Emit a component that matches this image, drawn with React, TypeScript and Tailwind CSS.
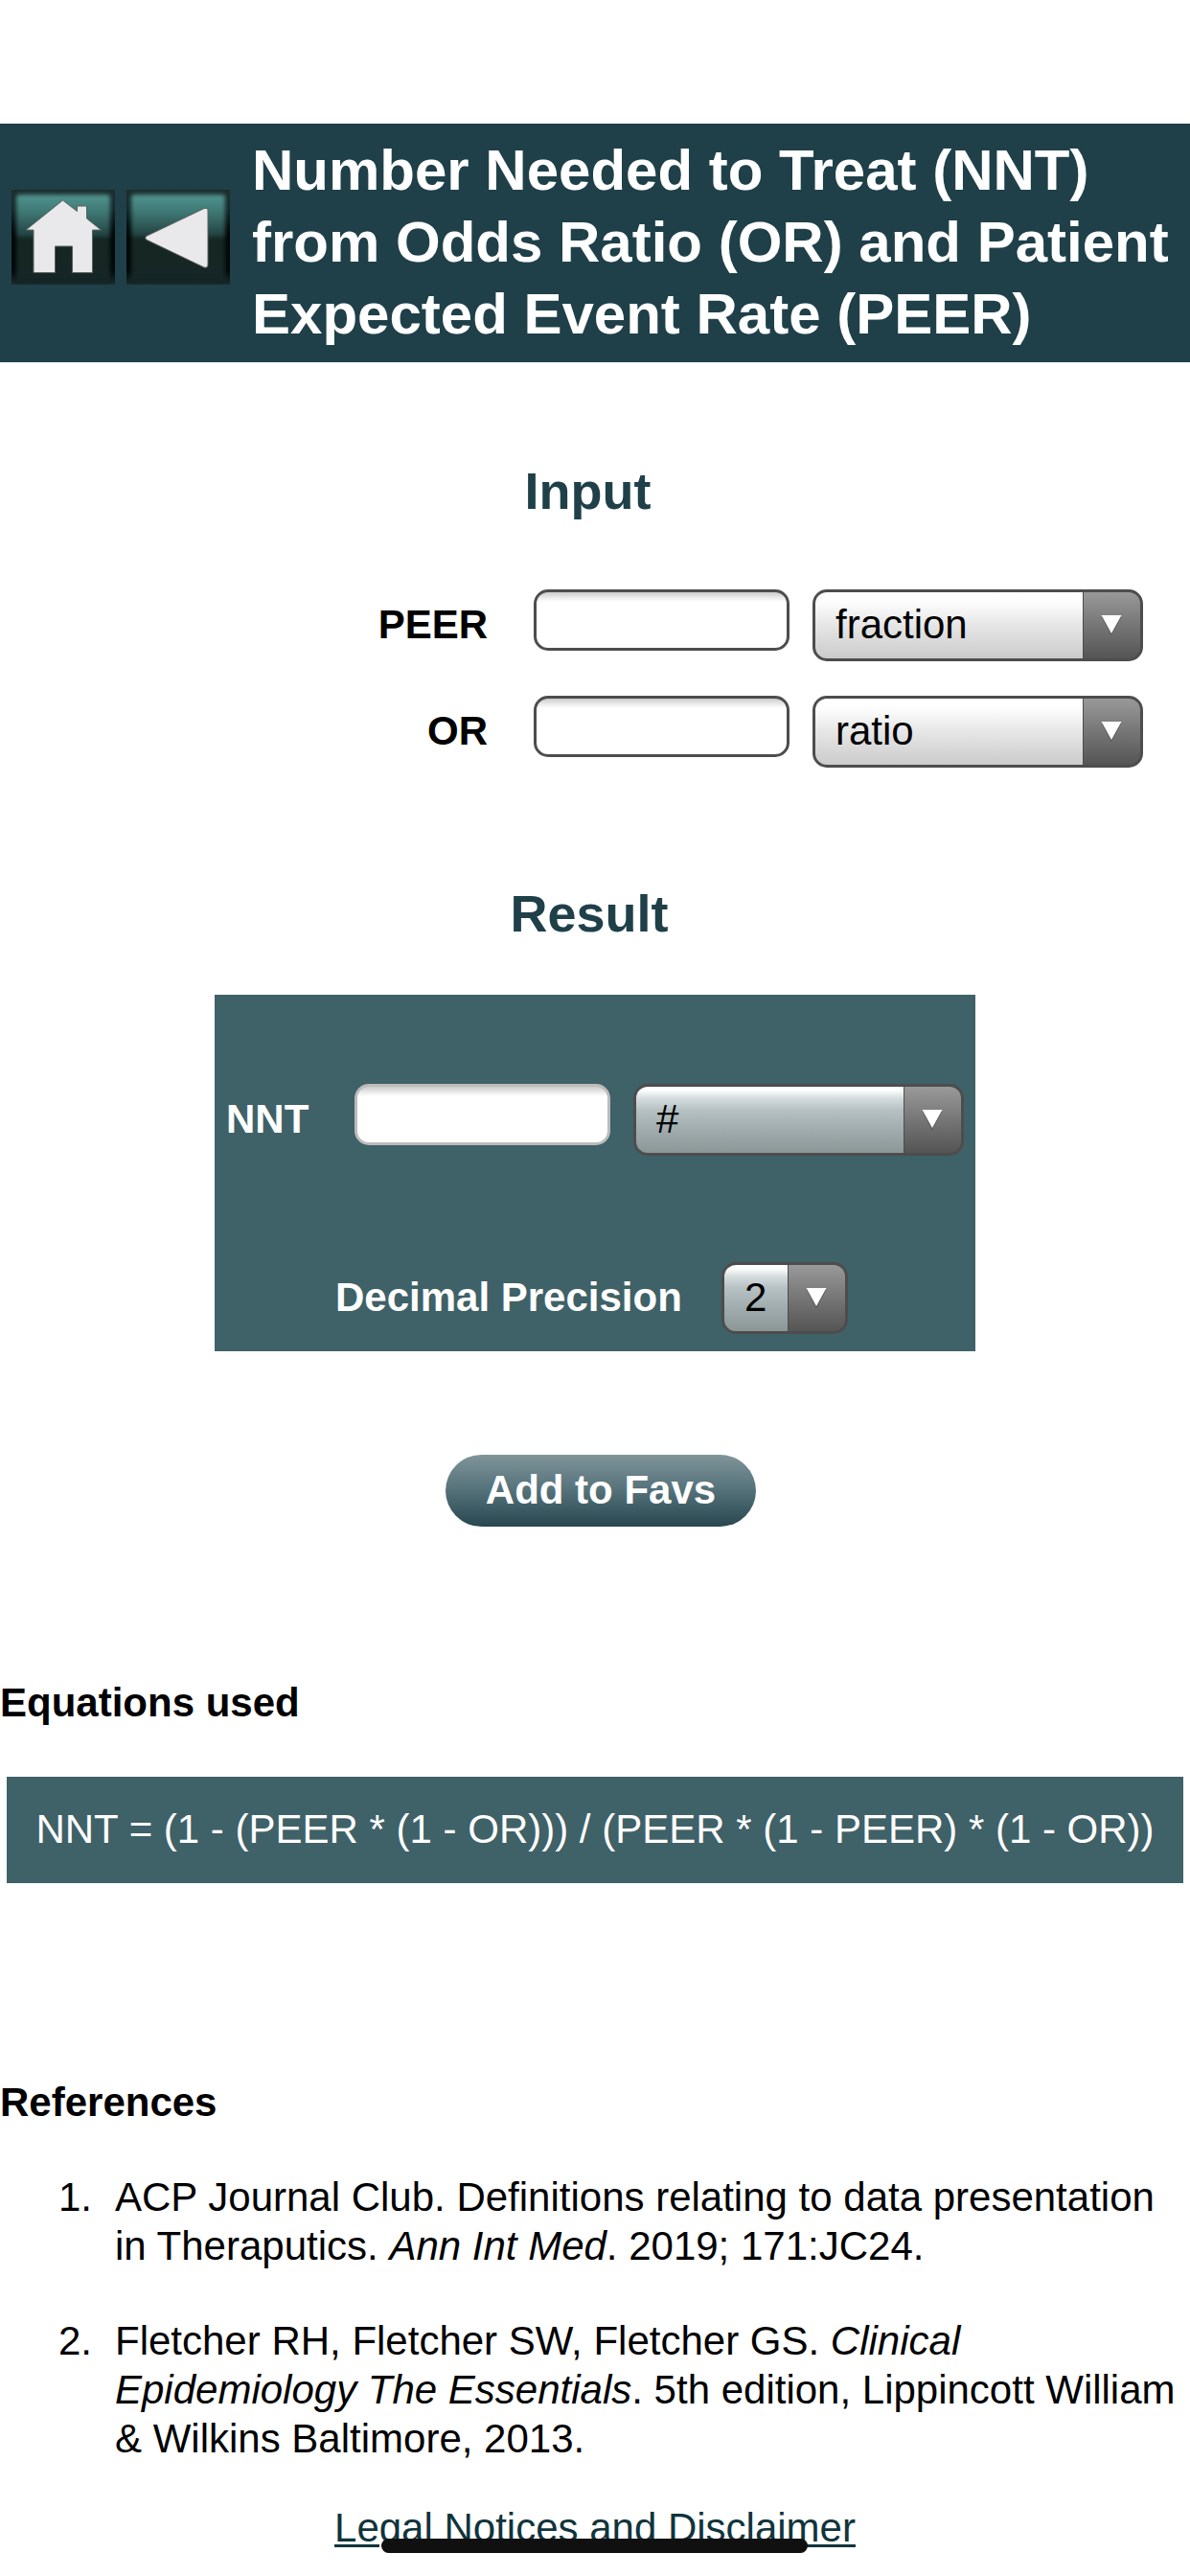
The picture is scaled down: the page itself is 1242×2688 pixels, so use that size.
import { useState } from 'react';
import type { ReactNode } from 'react';
import clsx from 'clsx';

// ─── Header Icons ────────────────────────────────────────────────────────────

function GlossyIcon({ id, label, children }: { id: string; label: string; children: ReactNode }) {
  return (
    <button type="button" aria-label={label} className="block h-[99px] w-[108px] shrink-0">
      <svg viewBox="0 0 108 99" className="block h-full w-full overflow-hidden">
        <defs>
          <linearGradient id={`${id}-edge`} x1="0" y1="0" x2="0" y2="1">
            <stop offset="0" stopColor="#1f2d2d" />
            <stop offset="0.2" stopColor="#14282a" />
            <stop offset="0.45" stopColor="#020606" />
            <stop offset="0.85" stopColor="#030707" />
            <stop offset="1" stopColor="#1b2c2e" />
          </linearGradient>
          <linearGradient id={`${id}-face`} x1="0" y1="0" x2="0" y2="1">
            <stop offset="0" stopColor="#519490" />
            <stop offset="0.2" stopColor="#3f7875" />
            <stop offset="0.47" stopColor="#234442" />
            <stop offset="0.5" stopColor="#142524" />
            <stop offset="1" stopColor="#152625" />
          </linearGradient>
          <filter id={`${id}-soft`} x="-10%" y="-10%" width="120%" height="120%">
            <feGaussianBlur stdDeviation="2" />
          </filter>
          <filter id={`${id}-glyph`} x="-10%" y="-10%" width="120%" height="120%">
            <feGaussianBlur stdDeviation="0.7" />
          </filter>
        </defs>
        <rect width="108" height="99" fill={`url(#${id}-edge)`} />
        <rect x="5" y="5" width="98" height="90" rx="3" fill={`url(#${id}-face)`} filter={`url(#${id}-soft)`} />
        <g fill="#e9e8ea" stroke="#59605f" strokeWidth="1" filter={`url(#${id}-glyph)`}>
          {children}
        </g>
      </svg>
    </button>
  );
}

function HomeIcon() {
  return (
    <GlossyIcon id="home" label="Home">
      <path d="M53.5 11 L68.5 22.5 V17 H78.5 V30 L93.5 42 H84.5 V86.5 H63.5 V59 H45.5 V86.5 H23 V42 H15 Z" />
    </GlossyIcon>
  );
}

function BackIcon() {
  return (
    <GlossyIcon id="back" label="Back">
      <path d="M20.5 48.5 L81 19.5 Q85 18.5 85 22 V78 Q85 82 81 81 L20.5 52 Q19 50.5 20.5 48.5 Z" />
    </GlossyIcon>
  );
}

// ─── Form Controls ───────────────────────────────────────────────────────────

function NumberInput({
  label,
  value,
  onChange,
  readOnly,
}: {
  label: string;
  value: string;
  onChange?: (value: string) => void;
  readOnly?: boolean;
}) {
  return (
    <input
      type="text"
      aria-label={label}
      value={value}
      readOnly={readOnly}
      onChange={(e) => onChange?.(e.target.value)}
      className={clsx(
        'h-16 w-[267px] shrink-0 rounded-[15px] border-[3px] bg-white bg-[linear-gradient(to_bottom,#cbcbcb_0px,#ececec_6px,#ffffff_10px)] px-3 text-[42px] text-black outline-none',
        readOnly ? 'border-[#bcbcbc]' : 'border-[#4d4d4d]'
      )}
    />
  );
}

function UnitSelect({ value, tinted, className }: { value: string; tinted?: boolean; className: string }) {
  return (
    <button
      type="button"
      className={clsx(
        'flex h-[75px] shrink-0 overflow-hidden rounded-[15px] border-[3px] border-[#4d4d4d] bg-[#4d4d4d] text-left',
        className
      )}
    >
      <span
        className={clsx(
          'h-full flex-1 pl-[21px] text-[42px] leading-[67px] text-black',
          tinted
            ? 'bg-[linear-gradient(to_bottom,#ffffff_0%,#fbfcfc_6%,#d6dddf_17%,#b6c1c3_35%,#a3afb1_60%,#8b9696_100%)]'
            : 'bg-[linear-gradient(to_bottom,#ffffff_0%,#fdfdfd_15%,#e6e6e6_50%,#cbcbcb_100%)]'
        )}
      >
        {value}
      </span>
      <span className="flex h-full w-[60px] justify-center border-l border-[#4d4d4d] bg-linear-to-b from-[#999999] to-[#555555] pt-6">
        <svg viewBox="0 0 24 24" className="-ml-0.5 h-6 w-6">
          <path d="M1.5 1.5 H22.5 L12 21 Z" fill="#555555" />
          <path d="M1.5 0 H22.5 L12 19 Z" fill="#ffffff" />
        </svg>
      </span>
    </button>
  );
}

function FieldLabel({ children, className }: { children: ReactNode; className?: string }) {
  return <span className={clsx('text-[42px] leading-[73px] font-bold', className)}>{children}</span>;
}

function SectionTitle({ children, className }: { children: ReactNode; className?: string }) {
  return (
    <h2 className={clsx('text-center text-[54px] leading-[62px] font-bold text-[#1f4049]', className)}>
      {children}
    </h2>
  );
}

// ─── Page ────────────────────────────────────────────────────────────────────

export default function App() {
  const [peer, setPeer] = useState('');
  const [oddsRatio, setOddsRatio] = useState('');

  const p = parseFloat(peer);
  const or = parseFloat(oddsRatio);
  const nnt = (1 - p * (1 - or)) / (p * (1 - p) * (1 - or));

  return (
    <div className="relative h-[2688px] w-[1242px] overflow-hidden bg-white pt-[129px] font-['Liberation_Sans',Arial,sans-serif] text-[42px] leading-[48px] text-black">
      <header className="flex h-[249px] items-center bg-[#1f4049] pl-3">
        <div className="flex gap-3 pb-3">
          <HomeIcon />
          <BackIcon />
        </div>
        <h1 className="ml-[23px] pb-0.5 text-[60px] leading-[75px] font-bold whitespace-nowrap text-white">
          Number Needed to Treat (NNT)
          <br />
          from Odds Ratio (OR) and Patient
          <br />
          Expected Event Rate (PEER)
        </h1>
      </header>

      <main>
        <SectionTitle className="mt-[103px] pr-[15px]">Input</SectionTitle>
        <div className="mt-[72px] flex flex-col gap-9">
          <div className="flex h-[75px] items-start">
            <FieldLabel className="w-[509px] text-right">PEER</FieldLabel>
            <div className="ml-12 flex gap-6">
              <NumberInput label="PEER" value={peer} onChange={setPeer} />
              <UnitSelect value="fraction" className="w-[345px]" />
            </div>
          </div>
          <div className="flex h-[75px] items-start">
            <FieldLabel className="w-[509px] text-right">OR</FieldLabel>
            <div className="ml-12 flex gap-6">
              <NumberInput label="OR" value={oddsRatio} onChange={setOddsRatio} />
              <UnitSelect value="ratio" className="w-[345px]" />
            </div>
          </div>
        </div>

        <SectionTitle className="mt-[121px] pr-3">Result</SectionTitle>
        <section className="mx-auto mt-[54px] h-[372px] w-[794px] bg-[#3f6168] pt-[93px] text-white">
          <div className="flex h-[75px] items-start pl-3">
            <FieldLabel className="w-[134px]">NNT</FieldLabel>
            <div className="flex gap-6">
              <NumberInput label="NNT" value={Number.isFinite(nnt) ? nnt.toFixed(2) : ''} readOnly />
              <UnitSelect value="#" tinted className="w-[345px]" />
            </div>
          </div>
          <div className="mt-[111px] flex h-[75px] items-start pl-[126px]">
            <FieldLabel className="w-[403px]">Decimal Precision</FieldLabel>
            <UnitSelect value="2" tinted className="w-[132px]" />
          </div>
        </section>

        <button
          type="button"
          className="mt-[108px] ml-[465px] block h-[75px] w-[324px] rounded-full bg-linear-to-b from-[#80949a] via-[#54717a] to-[#28474f] pb-px text-center font-bold text-white"
        >
          Add to Favs
        </button>

        <h3 className="mt-[160px] font-bold">Equations used</h3>
        <p className="mx-[7px] mt-[53px] h-[111px] bg-[#3f6168] text-center leading-[109px] whitespace-nowrap text-white">
          NNT = (1 - (PEER * (1 - OR))) / (PEER * (1 - PEER) * (1 - OR))
        </p>

        <h3 className="mt-[205px] font-bold">References</h3>
        <ol className="mt-[49px] flex flex-col gap-12 leading-[51px]">
          <li className="flex">
            <span className="w-24 text-right">1.</span>
            <p className="ml-6 whitespace-nowrap">
              ACP Journal Club. Definitions relating to data presentation
              <br />
              in Theraputics. <i>Ann Int Med</i>. 2019; 171:JC24.
            </p>
          </li>
          <li className="flex">
            <span className="w-24 text-right">2.</span>
            <p className="ml-6 whitespace-nowrap">
              Fletcher RH, Fletcher SW, Fletcher GS. <i>Clinical</i>
              <br />
              <i>Epidemiology The Essentials</i>. 5th edition, Lippincott William
              <br />
              &amp; Wilkins Baltimore, 2013.
            </p>
          </li>
        </ol>
      </main>

      <footer className="mt-11 text-center">
        <a href="#legal" className="text-[#10343c] underline decoration-[3px] underline-offset-[3px]">
          Legal Notices and Disclaimer
        </a>
      </footer>

      {/* Home indicator */}
      <div className="absolute bottom-6 left-[398px] h-[15px] w-[445px] rounded-full bg-[#101010]" />
    </div>
  );
}
